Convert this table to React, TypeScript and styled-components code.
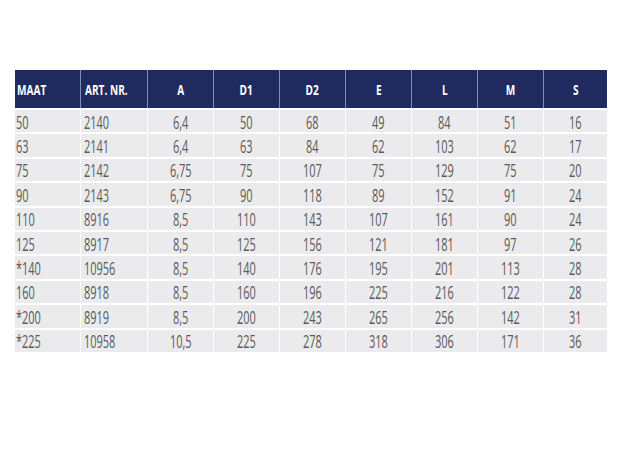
import React from "react";
import styled, { createGlobalStyle } from "styled-components";

const Global = createGlobalStyle`
  html, body { margin: 0; padding: 0; background: #ffffff; }
  body { width: 620px; height: 465px; overflow: hidden; font-family: "Open Sans", "Liberation Sans", sans-serif; }
`;

const Page = styled.div`
  padding: 70px 13px 0 15px;
`;

const Table = styled.div`
  display: grid;
  grid-template-columns: 65px 67px 66px 66px 66px 66px 66px 66px 64px;
  grid-template-rows: 38px repeat(10, 24.4px);
  width: 592px;
`;

const HeaderCell = styled.div<{ $align: "left" | "center"; $first?: boolean }>`
  background: #1f2b5e;
  color: #ffffff;
  font-weight: 700;
  font-size: 14px;
  display: flex;
  align-items: center;
  justify-content: ${(p) => (p.$align === "left" ? "flex-start" : "center")};
  padding-left: ${(p) => (p.$align === "left" ? "2px" : "0")};
  border-left: ${(p) => (p.$first ? "none" : "1.5px solid #7e8dbd")};
  box-sizing: border-box;
  padding-top: 2px;
`;

const BodyCell = styled.div<{ $align: "left" | "center"; $first?: boolean }>`
  background: #ebebed;
  color: #5a5a5a;
  font-size: 18px;
  display: flex;
  align-items: center;
  justify-content: ${(p) => (p.$align === "left" ? "flex-start" : "center")};
  padding-left: ${(p) => (p.$align === "left" ? "1px" : "0")};
  border-left: ${(p) => (p.$first ? "none" : "1px solid #ffffff")};
  border-top: 2px solid #ffffff;
  box-sizing: border-box;
  padding-top: 1px;
`;

const Squeeze = styled.span<{ $align: "left" | "center"; $scale: number }>`
  display: inline-block;
  white-space: nowrap;
  transform: scaleX(${(p) => p.$scale});
  transform-origin: ${(p) => (p.$align === "left" ? "left center" : "center center")};
  line-height: 1;
`;

const headers = ["MAAT", "ART. NR.", "A", "D1", "D2", "E", "L", "M", "S"];

const rows: string[][] = [
  ["50", "2140", "6,4", "50", "68", "49", "84", "51", "16"],
  ["63", "2141", "6,4", "63", "84", "62", "103", "62", "17"],
  ["75", "2142", "6,75", "75", "107", "75", "129", "75", "20"],
  ["90", "2143", "6,75", "90", "118", "89", "152", "91", "24"],
  ["110", "8916", "8,5", "110", "143", "107", "161", "90", "24"],
  ["125", "8917", "8,5", "125", "156", "121", "181", "97", "26"],
  ["*140", "10956", "8,5", "140", "176", "195", "201", "113", "28"],
  ["160", "8918", "8,5", "160", "196", "225", "216", "122", "28"],
  ["*200", "8919", "8,5", "200", "243", "265", "256", "142", "31"],
  ["*225", "10958", "10,5", "225", "278", "318", "306", "171", "36"],
];

const alignOf = (i: number): "left" | "center" => (i < 2 ? "left" : "center");

export default function App() {
  return (
    <>
      <Global />
      <Page>
        <Table>
          {headers.map((h, i) => (
            <HeaderCell key={h} $align={alignOf(i)} $first={i === 0} style={i === 1 ? { paddingLeft: 4 } : undefined}>
              <Squeeze $align={alignOf(i)} $scale={0.72}>{h}</Squeeze>
            </HeaderCell>
          ))}
          {rows.map((r, ri) =>
            r.map((v, ci) => (
              <BodyCell key={`${ri}-${ci}`} $align={alignOf(ci)} $first={ci === 0} style={ci === 1 ? { paddingLeft: 3 } : undefined}>
                <Squeeze $align={alignOf(ci)} $scale={0.61}>{v}</Squeeze>
              </BodyCell>
            ))
          )}
        </Table>
      </Page>
    </>
  );
}
